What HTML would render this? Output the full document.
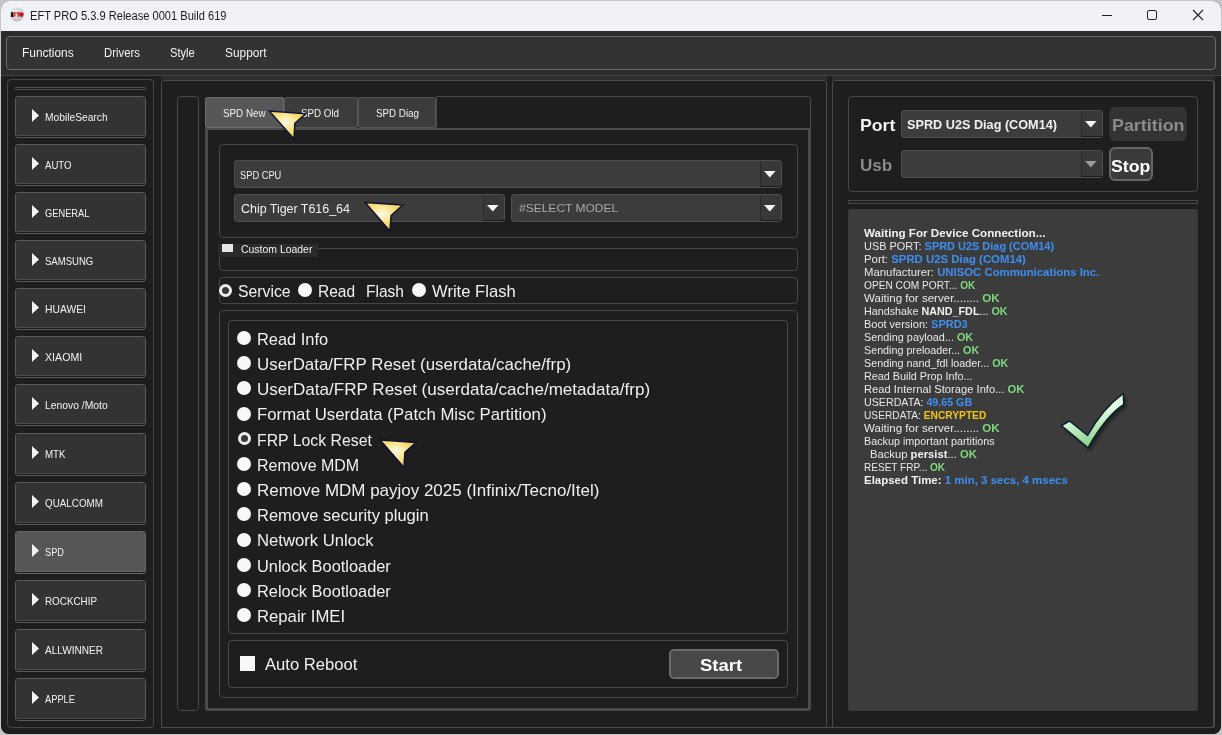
<!DOCTYPE html><html><head><meta charset='utf-8'><style>html,body{margin:0;padding:0;width:1222px;height:735px;overflow:hidden;background:#c6c6c6}
.t{position:absolute;white-space:pre;font-family:'Liberation Sans', sans-serif;transform-origin:0 0}</style></head><body><div style="position:absolute;left:0;top:0;width:1222px;height:735px;background:#c6c6c6"></div>
<div id="win" style="position:absolute;left:1px;top:1px;width:1220px;height:733px;background:#1e1e1e;border-radius:8px;overflow:hidden">
</div>
<div style="position:absolute;left:1px;top:1px;width:1220px;height:30px;background:#f0f2f7;border-radius:0px;box-sizing:border-box;border-radius:8px 8px 0 0;"></div>
<div style="position:absolute;left:1px;top:31px;width:1220px;height:44px;background:#2c2c2e;border-radius:0px;box-sizing:border-box;"></div>
<div style="position:absolute;left:6px;top:36px;width:1210px;height:34px;background:#333333;border:1px solid #6c6c6c;border-radius:4px;box-sizing:border-box;"></div>
<div style="position:absolute;left:1px;top:75px;width:1220px;height:1px;background:#434343;border-radius:0px;box-sizing:border-box;"></div>
<div style="position:absolute;left:1px;top:76px;width:1220px;height:658px;background:#1e1e1e;border-radius:0px;box-sizing:border-box;border-radius:0 0 8px 8px;"></div>
<svg style="position:absolute;left:9px;top:7px" width="16" height="16" viewBox="0 0 16 16"><defs><radialGradient id="ig" cx="0.4" cy="0.35" r="0.7"><stop offset="0" stop-color="#f4f4f6"/><stop offset="1" stop-color="#b8b8c0"/></radialGradient></defs><circle cx="8" cy="7.5" r="7" fill="url(#ig)"/><rect x="2" y="5.2" width="2.2" height="4.8" fill="#111"/><path d="M4.4 5.2h3v1.2h-1.7v1h1.5v1.1h-1.5V10H4.4z" fill="#d42020"/><path d="M7.6 5.2h3.2v1.2h-1V10H8.6V6.4h-1z" fill="#d42020"/><circle cx="12.3" cy="7.6" r="2.4" fill="#c81818"/></svg>
<div class="t" id="t0" style="transform:scaleX(0.8874);left:29.70px;top:10.03px;font-size:12.5px;line-height:12.5px;color:#1b1b1b;font-weight:normal;">EFT PRO 5.3.9 Release 0001 Build 619</div>
<div style="position:absolute;left:1102px;top:15px;width:10px;height:1px;background:#222"></div>
<div style="position:absolute;left:1147px;top:10px;width:10px;height:10px;border:1px solid #222;border-radius:2px;box-sizing:border-box"></div>
<svg style="position:absolute;left:1192px;top:9px" width="12" height="12" viewBox="0 0 12 12"><path d="M1 1L11 11M11 1L1 11" stroke="#222" stroke-width="1.1"/></svg>
<div class="t" id="t1" style="transform:scaleX(0.9936);left:22.30px;top:46.99px;font-size:12px;line-height:12px;color:#f2f2f2;font-weight:normal;">Functions</div>
<div class="t" id="t2" style="transform:scaleX(0.9474);left:104.00px;top:46.99px;font-size:12px;line-height:12px;color:#f2f2f2;font-weight:normal;">Drivers</div>
<div class="t" id="t3" style="transform:scaleX(0.9293);left:170.20px;top:46.99px;font-size:12px;line-height:12px;color:#f2f2f2;font-weight:normal;">Style</div>
<div class="t" id="t4" style="transform:scaleX(0.9897);left:225.20px;top:46.99px;font-size:12px;line-height:12px;color:#f2f2f2;font-weight:normal;">Support</div>
<div style="position:absolute;left:7px;top:79px;width:147px;height:649px;background:#1e1e1e;border:1px solid #464646;border-radius:4px;box-sizing:border-box;"></div>
<div style="position:absolute;left:15px;top:87px;width:131px;height:3px;background:#1e1e1e;border:1px solid #4e4e4e;border-radius:1px;box-sizing:border-box;"></div>
<div style="position:absolute;left:15px;top:96px;width:131px;height:42px;background:#1a1a1a;border:1px solid #5a5a5a;border-radius:3px;box-sizing:border-box;"></div>
<div style="position:absolute;left:16px;top:97px;width:129px;height:39px;background:#333333;border-radius:2px;box-sizing:border-box;border-bottom:1px solid #4a4a4a;"></div>
<svg style="position:absolute;left:32px;top:108.5px" width="8" height="13" viewBox="0 0 8 13"><path d="M0 0L7 6.5L0 13Z" fill="#f4f4f4"/></svg>
<div class="t" id="t5" style="transform:scaleX(0.8901);left:45.30px;top:111.95px;font-size:11.5px;line-height:11.5px;color:#f2f2f2;font-weight:normal;">MobileSearch</div>
<div style="position:absolute;left:15px;top:144px;width:131px;height:42px;background:#1a1a1a;border:1px solid #5a5a5a;border-radius:3px;box-sizing:border-box;"></div>
<div style="position:absolute;left:16px;top:145px;width:129px;height:39px;background:#333333;border-radius:2px;box-sizing:border-box;border-bottom:1px solid #4a4a4a;"></div>
<svg style="position:absolute;left:32px;top:156.5px" width="8" height="13" viewBox="0 0 8 13"><path d="M0 0L7 6.5L0 13Z" fill="#f4f4f4"/></svg>
<div class="t" id="t6" style="transform:scaleX(0.8346);left:45.30px;top:159.95px;font-size:11.5px;line-height:11.5px;color:#f2f2f2;font-weight:normal;">AUTO</div>
<div style="position:absolute;left:15px;top:192px;width:131px;height:42px;background:#1a1a1a;border:1px solid #5a5a5a;border-radius:3px;box-sizing:border-box;"></div>
<div style="position:absolute;left:16px;top:193px;width:129px;height:39px;background:#333333;border-radius:2px;box-sizing:border-box;border-bottom:1px solid #4a4a4a;"></div>
<svg style="position:absolute;left:32px;top:204.5px" width="8" height="13" viewBox="0 0 8 13"><path d="M0 0L7 6.5L0 13Z" fill="#f4f4f4"/></svg>
<div class="t" id="t7" style="transform:scaleX(0.8077);left:45.30px;top:207.95px;font-size:11.5px;line-height:11.5px;color:#f2f2f2;font-weight:normal;">GENERAL</div>
<div style="position:absolute;left:15px;top:240px;width:131px;height:42px;background:#1a1a1a;border:1px solid #5a5a5a;border-radius:3px;box-sizing:border-box;"></div>
<div style="position:absolute;left:16px;top:241px;width:129px;height:39px;background:#333333;border-radius:2px;box-sizing:border-box;border-bottom:1px solid #4a4a4a;"></div>
<svg style="position:absolute;left:32px;top:252.5px" width="8" height="13" viewBox="0 0 8 13"><path d="M0 0L7 6.5L0 13Z" fill="#f4f4f4"/></svg>
<div class="t" id="t8" style="transform:scaleX(0.8288);left:45.30px;top:255.95px;font-size:11.5px;line-height:11.5px;color:#f2f2f2;font-weight:normal;">SAMSUNG</div>
<div style="position:absolute;left:15px;top:288px;width:131px;height:42px;background:#1a1a1a;border:1px solid #5a5a5a;border-radius:3px;box-sizing:border-box;"></div>
<div style="position:absolute;left:16px;top:289px;width:129px;height:39px;background:#333333;border-radius:2px;box-sizing:border-box;border-bottom:1px solid #4a4a4a;"></div>
<svg style="position:absolute;left:32px;top:300.5px" width="8" height="13" viewBox="0 0 8 13"><path d="M0 0L7 6.5L0 13Z" fill="#f4f4f4"/></svg>
<div class="t" id="t9" style="transform:scaleX(0.8996);left:45.30px;top:303.95px;font-size:11.5px;line-height:11.5px;color:#f2f2f2;font-weight:normal;">HUAWEI</div>
<div style="position:absolute;left:15px;top:336px;width:131px;height:42px;background:#1a1a1a;border:1px solid #5a5a5a;border-radius:3px;box-sizing:border-box;"></div>
<div style="position:absolute;left:16px;top:337px;width:129px;height:39px;background:#333333;border-radius:2px;box-sizing:border-box;border-bottom:1px solid #4a4a4a;"></div>
<svg style="position:absolute;left:32px;top:348.5px" width="8" height="13" viewBox="0 0 8 13"><path d="M0 0L7 6.5L0 13Z" fill="#f4f4f4"/></svg>
<div class="t" id="t10" style="transform:scaleX(0.9239);left:45.30px;top:351.95px;font-size:11.5px;line-height:11.5px;color:#f2f2f2;font-weight:normal;">XIAOMI</div>
<div style="position:absolute;left:15px;top:384px;width:131px;height:42px;background:#1a1a1a;border:1px solid #5a5a5a;border-radius:3px;box-sizing:border-box;"></div>
<div style="position:absolute;left:16px;top:385px;width:129px;height:39px;background:#333333;border-radius:2px;box-sizing:border-box;border-bottom:1px solid #4a4a4a;"></div>
<svg style="position:absolute;left:32px;top:396.5px" width="8" height="13" viewBox="0 0 8 13"><path d="M0 0L7 6.5L0 13Z" fill="#f4f4f4"/></svg>
<div class="t" id="t11" style="transform:scaleX(0.8997);left:45.30px;top:399.95px;font-size:11.5px;line-height:11.5px;color:#f2f2f2;font-weight:normal;">Lenovo /Moto</div>
<div style="position:absolute;left:15px;top:433px;width:131px;height:43px;background:#1a1a1a;border:1px solid #5a5a5a;border-radius:3px;box-sizing:border-box;"></div>
<div style="position:absolute;left:16px;top:434px;width:129px;height:40px;background:#333333;border-radius:2px;box-sizing:border-box;border-bottom:1px solid #4a4a4a;"></div>
<svg style="position:absolute;left:32px;top:445.5px" width="8" height="13" viewBox="0 0 8 13"><path d="M0 0L7 6.5L0 13Z" fill="#f4f4f4"/></svg>
<div class="t" id="t12" style="transform:scaleX(0.8443);left:45.30px;top:448.95px;font-size:11.5px;line-height:11.5px;color:#f2f2f2;font-weight:normal;">MTK</div>
<div style="position:absolute;left:15px;top:482px;width:131px;height:43px;background:#1a1a1a;border:1px solid #5a5a5a;border-radius:3px;box-sizing:border-box;"></div>
<div style="position:absolute;left:16px;top:483px;width:129px;height:40px;background:#333333;border-radius:2px;box-sizing:border-box;border-bottom:1px solid #4a4a4a;"></div>
<svg style="position:absolute;left:32px;top:494.5px" width="8" height="13" viewBox="0 0 8 13"><path d="M0 0L7 6.5L0 13Z" fill="#f4f4f4"/></svg>
<div class="t" id="t13" style="transform:scaleX(0.8563);left:45.30px;top:497.95px;font-size:11.5px;line-height:11.5px;color:#f2f2f2;font-weight:normal;">QUALCOMM</div>
<div style="position:absolute;left:15px;top:531px;width:131px;height:43px;background:#1a1a1a;border:1px solid #666666;border-radius:3px;box-sizing:border-box;"></div>
<div style="position:absolute;left:16px;top:532px;width:129px;height:40px;background:#565656;border-radius:2px;box-sizing:border-box;border-bottom:1px solid #666;"></div>
<svg style="position:absolute;left:32px;top:543.5px" width="8" height="13" viewBox="0 0 8 13"><path d="M0 0L7 6.5L0 13Z" fill="#f4f4f4"/></svg>
<div class="t" id="t14" style="transform:scaleX(0.8032);left:45.30px;top:546.95px;font-size:11.5px;line-height:11.5px;color:#f2f2f2;font-weight:normal;">SPD</div>
<div style="position:absolute;left:15px;top:580px;width:131px;height:43px;background:#1a1a1a;border:1px solid #5a5a5a;border-radius:3px;box-sizing:border-box;"></div>
<div style="position:absolute;left:16px;top:581px;width:129px;height:40px;background:#333333;border-radius:2px;box-sizing:border-box;border-bottom:1px solid #4a4a4a;"></div>
<svg style="position:absolute;left:32px;top:592.5px" width="8" height="13" viewBox="0 0 8 13"><path d="M0 0L7 6.5L0 13Z" fill="#f4f4f4"/></svg>
<div class="t" id="t15" style="transform:scaleX(0.8566);left:45.30px;top:595.95px;font-size:11.5px;line-height:11.5px;color:#f2f2f2;font-weight:normal;">ROCKCHIP</div>
<div style="position:absolute;left:15px;top:629px;width:131px;height:43px;background:#1a1a1a;border:1px solid #5a5a5a;border-radius:3px;box-sizing:border-box;"></div>
<div style="position:absolute;left:16px;top:630px;width:129px;height:40px;background:#333333;border-radius:2px;box-sizing:border-box;border-bottom:1px solid #4a4a4a;"></div>
<svg style="position:absolute;left:32px;top:641.5px" width="8" height="13" viewBox="0 0 8 13"><path d="M0 0L7 6.5L0 13Z" fill="#f4f4f4"/></svg>
<div class="t" id="t16" style="transform:scaleX(0.8755);left:45.30px;top:644.95px;font-size:11.5px;line-height:11.5px;color:#f2f2f2;font-weight:normal;">ALLWINNER</div>
<div style="position:absolute;left:15px;top:678px;width:131px;height:43px;background:#1a1a1a;border:1px solid #5a5a5a;border-radius:3px;box-sizing:border-box;"></div>
<div style="position:absolute;left:16px;top:679px;width:129px;height:40px;background:#333333;border-radius:2px;box-sizing:border-box;border-bottom:1px solid #4a4a4a;"></div>
<svg style="position:absolute;left:32px;top:690.5px" width="8" height="13" viewBox="0 0 8 13"><path d="M0 0L7 6.5L0 13Z" fill="#f4f4f4"/></svg>
<div class="t" id="t17" style="transform:scaleX(0.8091);left:45.30px;top:693.95px;font-size:11.5px;line-height:11.5px;color:#f2f2f2;font-weight:normal;">APPLE</div>
<div style="position:absolute;left:161px;top:76px;width:666px;height:4px;background:#2e2e2e;border-radius:0px;box-sizing:border-box;"></div>
<div style="position:absolute;left:161px;top:80px;width:666px;height:648px;background:#1e1e1e;border:1px solid #4a4a4a;border-radius:3px;box-sizing:border-box;"></div>
<div style="position:absolute;left:161px;top:727px;width:1053px;height:1px;background:#4a4a4a;border-radius:0px;box-sizing:border-box;"></div>
<div style="position:absolute;left:177px;top:96px;width:22px;height:615px;background:#1e1e1e;border:1px solid #484848;border-radius:4px;box-sizing:border-box;"></div>
<div style="position:absolute;left:436px;top:96px;width:375px;height:34px;background:#1e1e1e;border:1px solid #484848;border-radius:0px;box-sizing:border-box;border-radius:0 3px 0 0;"></div>
<div style="position:absolute;left:205px;top:128px;width:606px;height:583px;background:#1e1e1e;border-radius:0px;box-sizing:border-box;border:3px solid #4a4a4a;border-top-width:2px;border-radius:0 0 3px 3px;"></div>
<div style="position:absolute;left:205px;top:97px;width:79px;height:31px;background:#575757;border:1px solid #6a6a6a;border-radius:2px;box-sizing:border-box;"></div>
<div style="position:absolute;left:284px;top:97px;width:74px;height:31px;background:#3c3c3c;border:1px solid #555555;border-radius:2px;box-sizing:border-box;"></div>
<div style="position:absolute;left:358px;top:97px;width:78px;height:31px;background:#3c3c3c;border:1px solid #555555;border-radius:2px;box-sizing:border-box;"></div>
<div class="t" id="t18" style="transform:scaleX(0.8524);left:222.50px;top:108.45px;font-size:11.5px;line-height:11.5px;color:#f0f0f0;font-weight:normal;">SPD New</div>
<div class="t" id="t19" style="transform:scaleX(0.8492);left:301.00px;top:108.45px;font-size:11.5px;line-height:11.5px;color:#f0f0f0;font-weight:normal;">SPD Old</div>
<div class="t" id="t20" style="transform:scaleX(0.8515);left:375.50px;top:108.45px;font-size:11.5px;line-height:11.5px;color:#f0f0f0;font-weight:normal;">SPD Diag</div>
<div style="position:absolute;left:219px;top:144px;width:579px;height:94px;background:transparent;border:1px solid #474747;border-radius:4px;box-sizing:border-box;"></div>
<div style="position:absolute;left:234px;top:160px;width:548px;height:28px;background:#3c3c3c;border:1px solid #4e4e4e;border-radius:3px;box-sizing:border-box;"></div>
<div style="position:absolute;left:760px;top:161px;width:21px;height:26px;background:#383838;border-radius:0px;box-sizing:border-box;border-left:1px solid #2a2a2a;border-bottom:1px solid #1c1c1c;"></div>
<svg style="position:absolute;left:763.7px;top:170.5px" width="12" height="7" viewBox="0 0 12 7"><path d="M0 0H11.6L5.8 6.4Z" fill="#f4f4f4"/></svg>
<div class="t" id="t21" style="transform:scaleX(0.8445);left:239.70px;top:169.71px;font-size:11px;line-height:11px;color:#f0f0f0;font-weight:normal;">SPD CPU</div>
<div style="position:absolute;left:234px;top:194px;width:271px;height:28px;background:#3c3c3c;border:1px solid #4e4e4e;border-radius:3px;box-sizing:border-box;"></div>
<div style="position:absolute;left:483px;top:195px;width:21px;height:26px;background:#383838;border-radius:0px;box-sizing:border-box;border-left:1px solid #2a2a2a;border-bottom:1px solid #1c1c1c;"></div>
<svg style="position:absolute;left:486.7px;top:204.5px" width="12" height="7" viewBox="0 0 12 7"><path d="M0 0H11.6L5.8 6.4Z" fill="#f4f4f4"/></svg>
<div class="t" id="t22" style="transform:scaleX(0.9938);left:241.30px;top:202.93px;font-size:12.5px;line-height:12.5px;color:#f0f0f0;font-weight:normal;">Chip Tiger T616_64</div>
<div style="position:absolute;left:511px;top:194px;width:271px;height:28px;background:#3c3c3c;border:1px solid #4e4e4e;border-radius:3px;box-sizing:border-box;"></div>
<div style="position:absolute;left:760px;top:195px;width:21px;height:26px;background:#383838;border-radius:0px;box-sizing:border-box;border-left:1px solid #2a2a2a;border-bottom:1px solid #1c1c1c;"></div>
<svg style="position:absolute;left:763.7px;top:204.5px" width="12" height="7" viewBox="0 0 12 7"><path d="M0 0H11.6L5.8 6.4Z" fill="#f4f4f4"/></svg>
<div class="t" id="t23" style="transform:scaleX(1.0440);left:518.90px;top:203.15px;font-size:11.5px;line-height:11.5px;color:#a8a8a8;font-weight:normal;">#SELECT MODEL</div>
<div style="position:absolute;left:219px;top:248px;width:579px;height:23px;background:transparent;border:1px solid #474747;border-radius:4px;box-sizing:border-box;"></div>
<div style="position:absolute;left:218px;top:244px;width:100px;height:13px;background:#2a2a2a;border-radius:0px;box-sizing:border-box;"></div>
<div style="position:absolute;left:222px;top:244px;width:11px;height:8px;background:#e6e6e6;border-radius:0px;box-sizing:border-box;"></div>
<div class="t" id="t24" style="transform:scaleX(0.9945);left:240.70px;top:244.27px;font-size:10.5px;line-height:10.5px;color:#f0f0f0;font-weight:normal;">Custom Loader</div>
<div style="position:absolute;left:219px;top:277px;width:579px;height:27px;background:transparent;border:1px solid #474747;border-radius:4px;box-sizing:border-box;"></div>
<div style="position:absolute;left:218.7px;top:283.9px;width:13px;height:13px;border-radius:50%;background:#3a3a3a;border:3px solid #f0f0f0;box-sizing:border-box"></div>
<div class="t" id="t25" style="transform:scaleX(0.9744);left:237.50px;top:283.40px;font-size:16.2px;line-height:16.2px;color:#f0f0f0;font-weight:normal;">Service</div>
<div style="position:absolute;left:297.7px;top:283.4px;width:14px;height:14px;border-radius:50%;background:#f8f8f8"></div>
<div class="t" id="t26" style="transform:scaleX(0.9586);left:317.80px;top:283.40px;font-size:16.2px;line-height:16.2px;color:#f0f0f0;font-weight:normal;">Read</div>
<div class="t" id="t27" style="transform:scaleX(0.9597);left:366.00px;top:283.40px;font-size:16.2px;line-height:16.2px;color:#f0f0f0;font-weight:normal;">Flash</div>
<div style="position:absolute;left:412px;top:283.4px;width:14px;height:14px;border-radius:50%;background:#f8f8f8"></div>
<div class="t" id="t28" style="transform:scaleX(1.0262);left:432.00px;top:283.40px;font-size:16.2px;line-height:16.2px;color:#f0f0f0;font-weight:normal;">Write Flash</div>
<div style="position:absolute;left:219px;top:310px;width:579px;height:388px;background:transparent;border:1px solid #474747;border-radius:4px;box-sizing:border-box;"></div>
<div style="position:absolute;left:228px;top:320px;width:560px;height:314px;background:transparent;border:1px solid #474747;border-radius:4px;box-sizing:border-box;"></div>
<div style="position:absolute;left:237px;top:331.0px;width:14px;height:14px;border-radius:50%;background:#f8f8f8"></div>
<div class="t" id="t29" style="transform:scaleX(1.0003);left:256.90px;top:330.77px;font-size:16.4px;line-height:16.4px;color:#f0f0f0;font-weight:normal;">Read Info</div>
<div style="position:absolute;left:237px;top:356.2px;width:14px;height:14px;border-radius:50%;background:#f8f8f8"></div>
<div class="t" id="t30" style="transform:scaleX(1.0306);left:256.90px;top:355.97px;font-size:16.4px;line-height:16.4px;color:#f0f0f0;font-weight:normal;">UserData/FRP Reset (userdata/cache/frp)</div>
<div style="position:absolute;left:237px;top:381.4px;width:14px;height:14px;border-radius:50%;background:#f8f8f8"></div>
<div class="t" id="t31" style="transform:scaleX(1.0406);left:256.90px;top:381.17px;font-size:16.4px;line-height:16.4px;color:#f0f0f0;font-weight:normal;">UserData/FRP Reset (userdata/cache/metadata/frp)</div>
<div style="position:absolute;left:237px;top:406.6px;width:14px;height:14px;border-radius:50%;background:#f8f8f8"></div>
<div class="t" id="t32" style="transform:scaleX(1.0220);left:256.90px;top:406.37px;font-size:16.4px;line-height:16.4px;color:#f0f0f0;font-weight:normal;">Format Userdata (Patch Misc Partition)</div>
<div style="position:absolute;left:237.5px;top:432.3px;width:13px;height:13px;border-radius:50%;background:#3a3a3a;border:3px solid #f0f0f0;box-sizing:border-box"></div>
<div class="t" id="t33" style="transform:scaleX(0.9652);left:256.90px;top:431.57px;font-size:16.4px;line-height:16.4px;color:#f0f0f0;font-weight:normal;">FRP Lock Reset</div>
<div style="position:absolute;left:237px;top:457.0px;width:14px;height:14px;border-radius:50%;background:#f8f8f8"></div>
<div class="t" id="t34" style="transform:scaleX(0.9758);left:256.90px;top:456.77px;font-size:16.4px;line-height:16.4px;color:#f0f0f0;font-weight:normal;">Remove MDM</div>
<div style="position:absolute;left:237px;top:482.2px;width:14px;height:14px;border-radius:50%;background:#f8f8f8"></div>
<div class="t" id="t35" style="transform:scaleX(1.0354);left:256.90px;top:481.97px;font-size:16.4px;line-height:16.4px;color:#f0f0f0;font-weight:normal;">Remove MDM payjoy 2025 (Infinix/Tecno/Itel)</div>
<div style="position:absolute;left:237px;top:507.4px;width:14px;height:14px;border-radius:50%;background:#f8f8f8"></div>
<div class="t" id="t36" style="transform:scaleX(1.0073);left:256.90px;top:507.17px;font-size:16.4px;line-height:16.4px;color:#f0f0f0;font-weight:normal;">Remove security plugin</div>
<div style="position:absolute;left:237px;top:532.6px;width:14px;height:14px;border-radius:50%;background:#f8f8f8"></div>
<div class="t" id="t37" style="transform:scaleX(1.0158);left:256.90px;top:532.37px;font-size:16.4px;line-height:16.4px;color:#f0f0f0;font-weight:normal;">Network Unlock</div>
<div style="position:absolute;left:237px;top:557.8px;width:14px;height:14px;border-radius:50%;background:#f8f8f8"></div>
<div class="t" id="t38" style="transform:scaleX(0.9990);left:256.90px;top:557.57px;font-size:16.4px;line-height:16.4px;color:#f0f0f0;font-weight:normal;">Unlock Bootloader</div>
<div style="position:absolute;left:237px;top:583.0px;width:14px;height:14px;border-radius:50%;background:#f8f8f8"></div>
<div class="t" id="t39" style="transform:scaleX(0.9990);left:256.90px;top:582.77px;font-size:16.4px;line-height:16.4px;color:#f0f0f0;font-weight:normal;">Relock Bootloader</div>
<div style="position:absolute;left:237px;top:608.2px;width:14px;height:14px;border-radius:50%;background:#f8f8f8"></div>
<div class="t" id="t40" style="transform:scaleX(1.0181);left:256.90px;top:607.97px;font-size:16.4px;line-height:16.4px;color:#f0f0f0;font-weight:normal;">Repair IMEI</div>
<div style="position:absolute;left:228px;top:640px;width:560px;height:48px;background:transparent;border:1px solid #474747;border-radius:4px;box-sizing:border-box;"></div>
<div style="position:absolute;left:240px;top:656px;width:15px;height:15px;background:#f8f8f8;border-radius:0px;box-sizing:border-box;"></div>
<div class="t" id="t41" style="transform:scaleX(1.0140);left:264.60px;top:655.87px;font-size:16.4px;line-height:16.4px;color:#f0f0f0;font-weight:normal;">Auto Reboot</div>
<div style="position:absolute;left:669px;top:649px;width:110px;height:30px;background:#484848;border-radius:0px;box-sizing:border-box;border:2px solid #6a6a6a;border-radius:5px;"></div>
<div class="t" id="t42" style="transform:scaleX(1.0869);left:700.00px;top:656.80px;font-size:17px;line-height:17px;color:#ffffff;font-weight:bold;">Start</div>
<div style="position:absolute;left:832px;top:76px;width:383px;height:4px;background:#2e2e2e;border-radius:0px;box-sizing:border-box;"></div>
<div style="position:absolute;left:832px;top:80px;width:383px;height:648px;background:#1e1e1e;border:1px solid #4a4a4a;border-radius:3px;box-sizing:border-box;border-right-width:2px;"></div>
<div style="position:absolute;left:848px;top:96px;width:350px;height:96px;background:transparent;border:1px solid #474747;border-radius:4px;box-sizing:border-box;"></div>
<div class="t" id="t43" style="transform:scaleX(1.0727);left:859.70px;top:117.06px;font-size:16.5px;line-height:16.5px;color:#f2f2f2;font-weight:bold;">Port</div>
<div class="t" id="t44" style="transform:scaleX(1.0362);left:859.70px;top:157.06px;font-size:16.5px;line-height:16.5px;color:#8a8a8a;font-weight:bold;">Usb</div>
<div style="position:absolute;left:901px;top:110px;width:202px;height:28px;background:#3c3c3c;border:1px solid #4e4e4e;border-radius:3px;box-sizing:border-box;"></div>
<div style="position:absolute;left:1081px;top:111px;width:21px;height:26px;background:#383838;border-radius:0px;box-sizing:border-box;border-left:1px solid #2a2a2a;border-bottom:1px solid #1c1c1c;"></div>
<svg style="position:absolute;left:1084.7px;top:120.5px" width="12" height="7" viewBox="0 0 12 7"><path d="M0 0H11.6L5.8 6.4Z" fill="#f4f4f4"/></svg>
<div class="t" id="t45" style="transform:scaleX(1.0306);left:907.30px;top:118.55px;font-size:12.3px;line-height:12.3px;color:#f0f0f0;font-weight:bold;">SPRD U2S Diag (COM14)</div>
<div style="position:absolute;left:901px;top:150px;width:202px;height:28px;background:#3c3c3c;border:1px solid #4e4e4e;border-radius:3px;box-sizing:border-box;"></div>
<div style="position:absolute;left:1081px;top:151px;width:21px;height:26px;background:#383838;border-radius:0px;box-sizing:border-box;border-left:1px solid #2a2a2a;border-bottom:1px solid #1c1c1c;"></div>
<svg style="position:absolute;left:1084.7px;top:160.5px" width="12" height="7" viewBox="0 0 12 7"><path d="M0 0H11.6L5.8 6.4Z" fill="#9a9a9a"/></svg>
<div style="position:absolute;left:1109px;top:107px;width:78px;height:34px;background:#333333;border-radius:6px;box-sizing:border-box;"></div>
<div class="t" id="t46" style="transform:scaleX(1.0977);left:1111.80px;top:117.28px;font-size:16.3px;line-height:16.3px;color:#8c8c8c;font-weight:bold;">Partition</div>
<div style="position:absolute;left:1109px;top:147px;width:44px;height:34px;background:#3a3a3a;border-radius:0px;box-sizing:border-box;border:2px solid #666;border-radius:6px;"></div>
<div class="t" id="t47" style="transform:scaleX(1.0428);left:1111.30px;top:157.90px;font-size:17px;line-height:17px;color:#ffffff;font-weight:bold;">Stop</div>
<div style="position:absolute;left:848px;top:200px;width:350px;height:4px;background:transparent;border:1px solid #474747;border-radius:0px;box-sizing:border-box;"></div>
<div style="position:absolute;left:848px;top:209px;width:350px;height:502px;background:#3c3c3c;border-radius:3px;box-sizing:border-box;"></div>
<div style="position:absolute;left:1198px;top:210px;width:1px;height:500px;background:#191919;border-radius:0px;box-sizing:border-box;"></div>
<div class="t" id="t48" style="transform:scaleX(1.0588);left:864.40px;top:227.91px;font-size:11px;line-height:11px;color:#f0f0f0;font-weight:normal;"><span style="color:#f2f2f2;font-weight:bold;">Waiting For Device Connection...</span></div>
<div class="t" id="t49" style="transform:scaleX(0.9946);left:863.80px;top:240.91px;font-size:11px;line-height:11px;color:#f0f0f0;font-weight:normal;"><span style="color:#e8e8e8;">USB PORT: </span><span style="color:#3d8ff0;font-weight:bold;">SPRD U2S Diag (COM14)</span></div>
<div class="t" id="t50" style="transform:scaleX(1.0345);left:863.80px;top:253.91px;font-size:11px;line-height:11px;color:#f0f0f0;font-weight:normal;"><span style="color:#e8e8e8;">Port: </span><span style="color:#3d8ff0;font-weight:bold;">SPRD U2S Diag (COM14)</span></div>
<div class="t" id="t51" style="transform:scaleX(1.0316);left:863.80px;top:266.91px;font-size:11px;line-height:11px;color:#f0f0f0;font-weight:normal;"><span style="color:#e8e8e8;">Manufacturer: </span><span style="color:#3d8ff0;font-weight:bold;">UNISOC Communications Inc.</span></div>
<div class="t" id="t52" style="transform:scaleX(0.9221);left:863.80px;top:279.91px;font-size:11px;line-height:11px;color:#f0f0f0;font-weight:normal;"><span style="color:#e8e8e8;">OPEN COM PORT... </span><span style="color:#7fd97f;font-weight:bold;">OK</span></div>
<div class="t" id="t53" style="transform:scaleX(1.0489);left:863.80px;top:292.91px;font-size:11px;line-height:11px;color:#f0f0f0;font-weight:normal;"><span style="color:#e8e8e8;">Waiting for server........ </span><span style="color:#7fd97f;font-weight:bold;">OK</span></div>
<div class="t" id="t54" style="transform:scaleX(0.9786);left:863.80px;top:305.91px;font-size:11px;line-height:11px;color:#f0f0f0;font-weight:normal;"><span style="color:#e8e8e8;">Handshake </span><span style="color:#f2f2f2;font-weight:bold;">NAND_FDL</span><span style="color:#e8e8e8;">... </span><span style="color:#7fd97f;font-weight:bold;">OK</span></div>
<div class="t" id="t55" style="transform:scaleX(0.9976);left:863.80px;top:318.91px;font-size:11px;line-height:11px;color:#f0f0f0;font-weight:normal;"><span style="color:#e8e8e8;">Boot version: </span><span style="color:#3d8ff0;font-weight:bold;">SPRD3</span></div>
<div class="t" id="t56" style="transform:scaleX(0.9866);left:863.80px;top:331.91px;font-size:11px;line-height:11px;color:#f0f0f0;font-weight:normal;"><span style="color:#e8e8e8;">Sending payload... </span><span style="color:#7fd97f;font-weight:bold;">OK</span></div>
<div class="t" id="t57" style="transform:scaleX(0.9760);left:863.80px;top:344.91px;font-size:11px;line-height:11px;color:#f0f0f0;font-weight:normal;"><span style="color:#e8e8e8;">Sending preloader... </span><span style="color:#7fd97f;font-weight:bold;">OK</span></div>
<div class="t" id="t58" style="transform:scaleX(0.9797);left:863.80px;top:357.91px;font-size:11px;line-height:11px;color:#f0f0f0;font-weight:normal;"><span style="color:#e8e8e8;">Sending nand_fdl loader... </span><span style="color:#7fd97f;font-weight:bold;">OK</span></div>
<div class="t" id="t59" style="transform:scaleX(0.9811);left:863.80px;top:370.91px;font-size:11px;line-height:11px;color:#f0f0f0;font-weight:normal;"><span style="color:#e8e8e8;">Read Build Prop Info...</span></div>
<div class="t" id="t60" style="transform:scaleX(1.0167);left:863.80px;top:383.91px;font-size:11px;line-height:11px;color:#f0f0f0;font-weight:normal;"><span style="color:#e8e8e8;">Read Internal Storage Info... </span><span style="color:#7fd97f;font-weight:bold;">OK</span></div>
<div class="t" id="t61" style="transform:scaleX(0.9696);left:863.80px;top:396.91px;font-size:11px;line-height:11px;color:#f0f0f0;font-weight:normal;"><span style="color:#e8e8e8;">USERDATA: </span><span style="color:#3d8ff0;font-weight:bold;">49.65 GB</span></div>
<div class="t" id="t62" style="transform:scaleX(0.9277);left:863.80px;top:409.91px;font-size:11px;line-height:11px;color:#f0f0f0;font-weight:normal;"><span style="color:#e8e8e8;">USERDATA: </span><span style="color:#f2c21c;font-weight:bold;">ENCRYPTED</span></div>
<div class="t" id="t63" style="transform:scaleX(1.0496);left:863.80px;top:422.91px;font-size:11px;line-height:11px;color:#f0f0f0;font-weight:normal;"><span style="color:#e8e8e8;">Waiting for server........ </span><span style="color:#7fd97f;font-weight:bold;">OK</span></div>
<div class="t" id="t64" style="transform:scaleX(0.9805);left:863.80px;top:435.91px;font-size:11px;line-height:11px;color:#f0f0f0;font-weight:normal;"><span style="color:#e8e8e8;">Backup important partitions</span></div>
<div class="t" id="t65" style="transform:scaleX(1.0214);left:869.50px;top:448.91px;font-size:11px;line-height:11px;color:#f0f0f0;font-weight:normal;"><span style="color:#e8e8e8;">Backup </span><span style="color:#f2f2f2;font-weight:bold;">persist</span><span style="color:#e8e8e8;">... </span><span style="color:#7fd97f;font-weight:bold;">OK</span></div>
<div class="t" id="t66" style="transform:scaleX(0.9128);left:863.80px;top:461.91px;font-size:11px;line-height:11px;color:#f0f0f0;font-weight:normal;"><span style="color:#e8e8e8;">RESET FRP... </span><span style="color:#7fd97f;font-weight:bold;">OK</span></div>
<div class="t" id="t67" style="transform:scaleX(1.0426);left:863.80px;top:474.91px;font-size:11px;line-height:11px;color:#f0f0f0;font-weight:normal;"><span style="color:#f2f2f2;font-weight:bold;">Elapsed Time: </span><span style="color:#3d8ff0;font-weight:bold;">1 min, 3 secs, 4 msecs</span></div>
<svg style="position:absolute;left:1050px;top:385px" width="90" height="70" viewBox="1050 385 90 70">
<defs><linearGradient id="cg" x1="0" y1="0" x2="0.3" y2="1"><stop offset="0" stop-color="#b8eeb8"/><stop offset="0.45" stop-color="#e4fbe4"/><stop offset="1" stop-color="#86d286"/></linearGradient>
<filter id="blr" x="-20%" y="-20%" width="140%" height="140%"><feGaussianBlur stdDeviation="1.5"/></filter></defs>
<path d="M1061.4,425.5 L1069.5,421 L1087.6,435.5 Q1103,408 1123.3,393.4 L1123.8,404.5 Q1106,416 1088,447.9 Z" fill="#000" opacity="0.45" transform="translate(2.5,3)" filter="url(#blr)"/>
<path d="M1061.4,425.5 L1069.5,421 L1087.6,435.5 Q1103,408 1123.3,393.4 L1123.8,404.5 Q1106,416 1088,447.9 Z" fill="url(#cg)" stroke="#0c1f2e" stroke-width="1.5" stroke-linejoin="round"/>
</svg>
<svg style="position:absolute;left:0;top:0" width="1222" height="735"><defs><radialGradient id="yg" cx="0.45" cy="0.4" r="0.6"><stop offset="0" stop-color="#fffbea"/><stop offset="0.45" stop-color="#f9e88e"/><stop offset="1" stop-color="#eec83a"/></radialGradient></defs><path d="M269.2,111 L305.6,113.8 L294.9,123.3 L294,138.9 Z" fill="url(#yg)" stroke="#14103a" stroke-width="1.5" stroke-linejoin="miter"/><path d="M365.1,202.6 L402.8,205 L391.1,215.7 L389.9,231 Z" fill="url(#yg)" stroke="#14103a" stroke-width="1.5" stroke-linejoin="miter"/><path d="M380.1,440 L415.9,442.5 L404.9,452.3 L404,467.6 Z" fill="url(#yg)" stroke="#14103a" stroke-width="1.5" stroke-linejoin="miter"/></svg></body></html>
